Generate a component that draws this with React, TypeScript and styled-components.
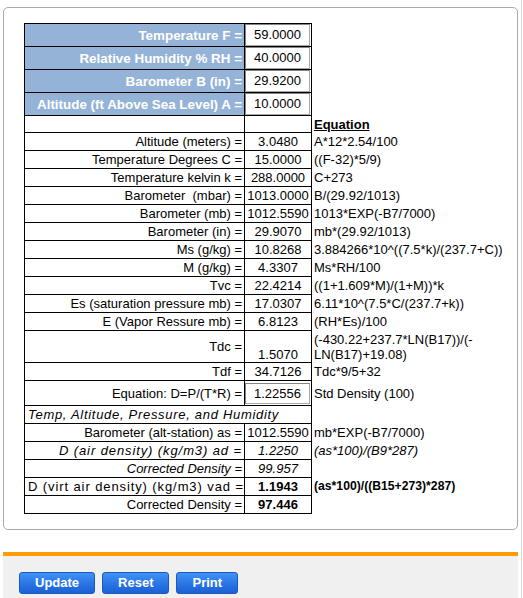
import React from 'react';
import styled, { createGlobalStyle, css } from 'styled-components';

const GlobalStyle = createGlobalStyle`
  html, body { margin: 0; padding: 0; background: #ffffff; }
  body {
    font-family: "Liberation Sans", Arial, sans-serif;
    font-size: 13px;
    color: #000;
  }
`;

const Page = styled.div`
  width: 515px;
  min-height: 591px;
  padding: 7px 3px 0 3px;
  border-right: 1px solid #d6d6d6;
`;

const Panel = styled.div`
  border: 1px solid #a9a9a9;
  border-radius: 5px;
  padding: 15px 0 15px 20px;
`;

const Sheet = styled.table`
  border-collapse: collapse;
  table-layout: fixed;
  width: 478px;
`;

const Row = styled.tr<{ $h: number }>`
  height: ${(p) => p.$h}px;
`;

type Variant = 'header' | 'plain' | 'italic';

const Label = styled.td<{ $variant?: Variant; $spread?: number }>`
  border: 1px solid #000;
  padding: 0 2px 0 3px;
  text-align: right;
  white-space: pre;
  font-size: 13px;
  line-height: 15px;
  letter-spacing: ${(p) => p.$spread ?? 0}px;
  ${(p) =>
    p.$variant === 'header' &&
    css`
      background: #95b3d7;
      color: #ffffff;
      font-weight: bold;
      font-size: 13.4px;
    `}
  ${(p) =>
    p.$variant === 'italic' &&
    css`
      font-style: italic;
    `}
`;

const Caption = styled.td`
  border: 1px solid #000;
  padding: 0 3px;
  text-align: left;
  font-style: italic;
  white-space: nowrap;
  line-height: 15px;
  letter-spacing: 0.7px;
`;

const Value = styled.td<{ $bold?: boolean; $italic?: boolean; $bottom?: boolean; $boxed?: boolean }>`
  border: 1px solid #000;
  padding: 0 ${(p) => (p.$boxed ? 0 : 1)}px;
  text-align: center;
  white-space: nowrap;
  line-height: 15px;
  vertical-align: ${(p) => (p.$bottom ? 'bottom' : 'middle')};
  font-weight: ${(p) => (p.$bold ? 'bold' : 'normal')};
  font-style: ${(p) => (p.$italic ? 'italic' : 'normal')};
`;

const Field = styled.div<{ $h: number }>`
  height: ${(p) => p.$h - 2}px;
  line-height: ${(p) => p.$h - 2}px;
  border: 1px solid #a8a8a8;
  border-top-color: #858585;
  border-left-color: #858585;
  background: #fff;
  text-align: center;
  margin-right: 1px;
`;

const Eq = styled.td<{ $bold?: boolean; $italic?: boolean; $title?: boolean }>`
  border: none;
  padding: 0 0 0 2px;
  white-space: nowrap;
  line-height: 15px;
  text-align: left;
  font-size: ${(p) => (p.$bold ? 12.2 : 13)}px;
  font-weight: ${(p) => (p.$bold || p.$title ? 'bold' : 'normal')};
  font-style: ${(p) => (p.$italic ? 'italic' : 'normal')};
  text-decoration: ${(p) => (p.$title ? 'underline' : 'none')};
`;

const Footer = styled.div`
  margin-top: 22px;
  border-top: 4px solid #ff9c00;
  background: #f0f0f0;
  padding: 16px 16px 24px;
  display: flex;
  gap: 7px;
`;

const Button = styled.button`
  height: 22px;
  padding: 0 15px;
  border: 1px solid #1d58bd;
  border-radius: 3px;
  background: linear-gradient(#3f93f5, #2a74e6 55%, #1b60d2);
  color: #ffffff;
  font-family: "Liberation Sans", Arial, sans-serif;
  font-weight: bold;
  font-size: 13px;
  line-height: 20px;
  cursor: pointer;
`;

const inputs: [string, string][] = [
  ['Temperature F =', '59.0000'],
  ['Relative Humidity % RH =', '40.0000'],
  ['Barometer B (in) =', '29.9200'],
  ['Altitude (ft Above Sea Level) A =', '10.0000'],
];

const calc: [string, string, string][] = [
  ['Altitude (meters) =', '3.0480', 'A*12*2.54/100'],
  ['Temperature Degrees C =', '15.0000', '((F-32)*5/9)'],
  ['Temperature kelvin k =', '288.0000', 'C+273'],
  ['Barometer  (mbar) =', '1013.0000', 'B/(29.92/1013)'],
  ['Barometer (mb) =', '1012.5590', '1013*EXP(-B7/7000)'],
  ['Barometer (in) =', '29.9070', 'mb*(29.92/1013)'],
  ['Ms (g/kg) =', '10.8268', '3.884266*10^((7.5*k)/(237.7+C))'],
  ['M (g/kg) =', '4.3307', 'Ms*RH/100'],
  ['Tvc =', '22.4214', '((1+1.609*M)/(1+M))*k'],
  ['Es (saturation pressure mb) =', '17.0307', '6.11*10^(7.5*C/(237.7+k))'],
  ['E (Vapor Ressure mb) =', '6.8123', '(RH*Es)/100'],
];

type Density = {
  label: string;
  value: string;
  eq: string;
  italic?: boolean;
  bold?: boolean;
  spread?: number;
};

const density: Density[] = [
  { label: 'Barometer (alt-station) as =', value: '1012.5590', eq: 'mb*EXP(-B7/7000)' },
  { label: 'D (air density) (kg/m3) ad =', value: '1.2250', eq: '(as*100)/(B9*287)', italic: true, spread: 0.9 },
  { label: 'Corrected Density =', value: '99.957', eq: '', italic: true },
  { label: 'D (virt air density) (kg/m3) vad =', value: '1.1943', eq: '(as*100)/((B15+273)*287)', bold: true, spread: 0.9 },
  { label: 'Corrected Density =', value: '97.446', eq: '', bold: true },
];

export default function App() {
  return (
    <>
      <GlobalStyle />
      <Page>
        <Panel>
          <Sheet>
            <colgroup>
              <col style={{ width: 220 }} />
              <col style={{ width: 67 }} />
              <col style={{ width: 191 }} />
            </colgroup>
            <tbody>
              {inputs.map(([l, v]) => (
                <Row $h={23} key={l}>
                  <Label $variant="header">{l}</Label>
                  <Value $boxed>
                    <Field $h={22}>{v}</Field>
                  </Value>
                  <Eq />
                </Row>
              ))}
              <Row $h={17}>
                <Label />
                <Value />
                <Eq $title>Equation</Eq>
              </Row>
              {calc.map(([l, v, e]) => (
                <Row $h={18} key={l}>
                  <Label>{l}</Label>
                  <Value>{v}</Value>
                  <Eq>{e}</Eq>
                </Row>
              ))}
              <Row $h={32}>
                <Label>Tdc =</Label>
                <Value $bottom>1.5070</Value>
                <Eq>
                  (-430.22+237.7*LN(B17))/(-
                  <br />
                  LN(B17)+19.08)
                </Eq>
              </Row>
              <Row $h={18}>
                <Label>Tdf =</Label>
                <Value>34.7126</Value>
                <Eq>Tdc*9/5+32</Eq>
              </Row>
              <Row $h={25}>
                <Label>Equation: D=P/(T*R) =</Label>
                <Value $boxed>
                  <Field $h={21}>1.22556</Field>
                </Value>
                <Eq>Std Density (100)</Eq>
              </Row>
              <Row $h={18}>
                <Caption colSpan={2}>Temp, Altitude, Pressure, and Humidity</Caption>
                <Eq />
              </Row>
              {density.map((d, i) => (
                <Row $h={18} key={i}>
                  <Label $variant={d.italic ? 'italic' : 'plain'} $spread={d.spread}>
                    {d.label}
                  </Label>
                  <Value $italic={d.italic} $bold={d.bold}>
                    {d.value}
                  </Value>
                  <Eq $italic={d.italic} $bold={d.bold}>
                    {d.eq}
                  </Eq>
                </Row>
              ))}
            </tbody>
          </Sheet>
        </Panel>
        <Footer>
          <Button type="button">Update</Button>
          <Button type="button">Reset</Button>
          <Button type="button">Print</Button>
        </Footer>
      </Page>
    </>
  );
}
